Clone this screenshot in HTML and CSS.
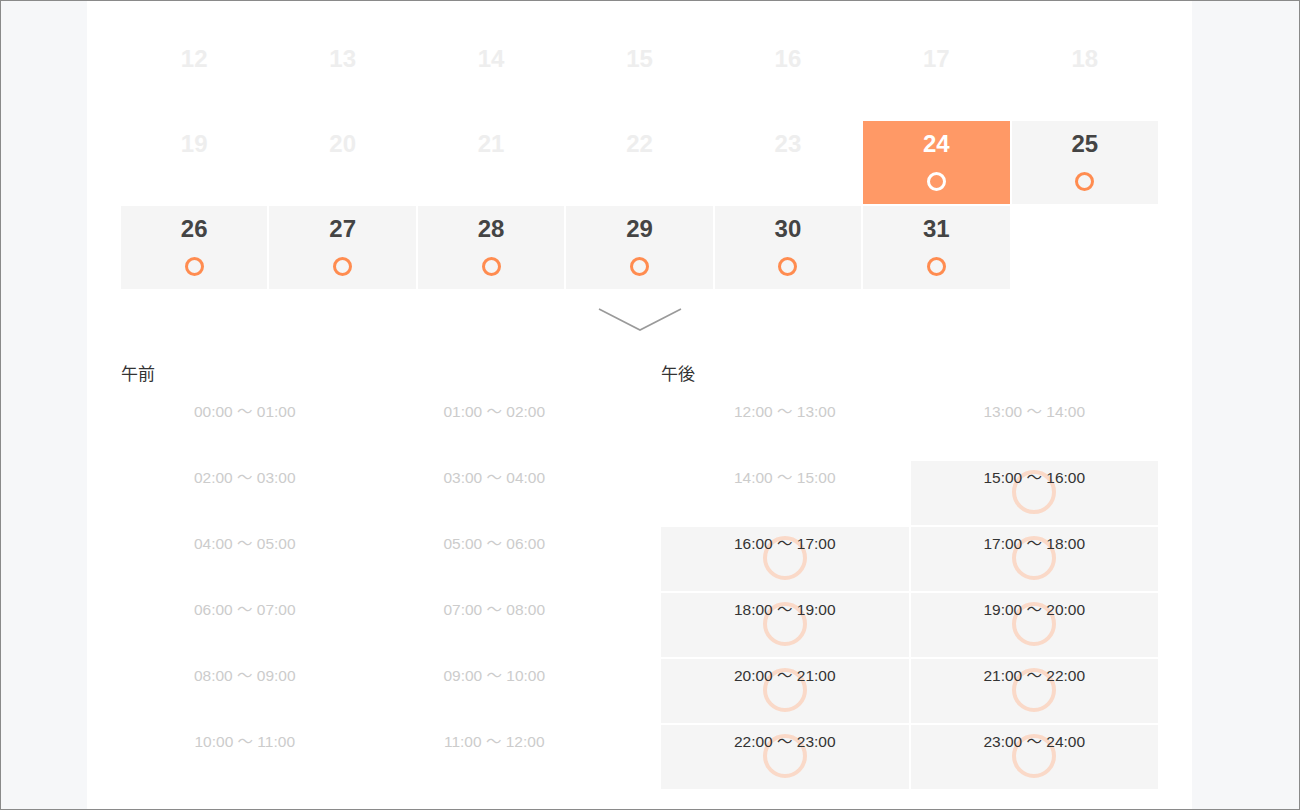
FILE: index.html
```html
<!DOCTYPE html>
<html lang="ja">
<head>
    <meta charset="UTF-8">
    <meta name="viewport" content="width=device-width, initial-scale=1.0">
    <title>予約カレンダー</title>
    <link rel="stylesheet" href="styles.css">
</head>
<body>
<div class="frame">
    <div class="panel">
        <div class="calendar">
            <div class="day off"><span class="num">12</span></div>
            <div class="day off"><span class="num">13</span></div>
            <div class="day off"><span class="num">14</span></div>
            <div class="day off"><span class="num">15</span></div>
            <div class="day off"><span class="num">16</span></div>
            <div class="day off"><span class="num">17</span></div>
            <div class="day off"><span class="num">18</span></div>

            <div class="day off"><span class="num">19</span></div>
            <div class="day off"><span class="num">20</span></div>
            <div class="day off"><span class="num">21</span></div>
            <div class="day off"><span class="num">22</span></div>
            <div class="day off"><span class="num">23</span></div>
            <div class="day open selected"><span class="num">24</span><span class="mark"></span></div>
            <div class="day open"><span class="num">25</span><span class="mark"></span></div>

            <div class="day open"><span class="num">26</span><span class="mark"></span></div>
            <div class="day open"><span class="num">27</span><span class="mark"></span></div>
            <div class="day open"><span class="num">28</span><span class="mark"></span></div>
            <div class="day open"><span class="num">29</span><span class="mark"></span></div>
            <div class="day open"><span class="num">30</span><span class="mark"></span></div>
            <div class="day open"><span class="num">31</span><span class="mark"></span></div>
            <div class="day empty"></div>
        </div>

        <div class="arrow">
            <svg width="84" height="26" viewBox="0 0 84 26">
                <polyline points="1,2 42,23 83,2" fill="none" stroke="#9a9a9a" stroke-width="1.6"/>
            </svg>
        </div>

        <div class="times">
            <div class="period">
                <div class="period-label">午前</div>
                <div class="slots">
                    <div class="slot">00:00 〜 01:00</div>
                    <div class="slot">01:00 〜 02:00</div>
                    <div class="slot">02:00 〜 03:00</div>
                    <div class="slot">03:00 〜 04:00</div>
                    <div class="slot">04:00 〜 05:00</div>
                    <div class="slot">05:00 〜 06:00</div>
                    <div class="slot">06:00 〜 07:00</div>
                    <div class="slot">07:00 〜 08:00</div>
                    <div class="slot">08:00 〜 09:00</div>
                    <div class="slot">09:00 〜 10:00</div>
                    <div class="slot">10:00 〜 11:00</div>
                    <div class="slot">11:00 〜 12:00</div>
                </div>
            </div>
            <div class="period">
                <div class="period-label">午後</div>
                <div class="slots">
                    <div class="slot">12:00 〜 13:00</div>
                    <div class="slot">13:00 〜 14:00</div>
                    <div class="slot">14:00 〜 15:00</div>
                    <div class="slot open"><span>15:00 〜 16:00</span></div>
                    <div class="slot open"><span>16:00 〜 17:00</span></div>
                    <div class="slot open"><span>17:00 〜 18:00</span></div>
                    <div class="slot open"><span>18:00 〜 19:00</span></div>
                    <div class="slot open"><span>19:00 〜 20:00</span></div>
                    <div class="slot open"><span>20:00 〜 21:00</span></div>
                    <div class="slot open"><span>21:00 〜 22:00</span></div>
                    <div class="slot open"><span>22:00 〜 23:00</span></div>
                    <div class="slot open"><span>23:00 〜 24:00</span></div>
                </div>
            </div>
        </div>
    </div>
</div>
</body>
</html>
```

FILE: styles.css
```css
body {
    margin: 0;
    font-family: "Liberation Sans", Arial, "Noto Sans CJK JP", sans-serif;
    color: #333;
}
.frame {
    height: 810px;
    box-sizing: border-box;
    border: 1px solid #8a8a8a;
    background-color: #f6f7f9;
    padding: 0 107px 0 86px;
    overflow: hidden;
}
.panel {
    background-color: #fff;
    height: 100%;
    padding: 35px 34px 0;
}

/* calendar */
.calendar {
    display: grid;
    grid-template-columns: repeat(7, 1fr);
    grid-auto-rows: 83px;
    gap: 2px;
}
.day {
    display: flex;
    flex-direction: column;
    align-items: center;
    padding-top: 9px;
    box-sizing: border-box;
}
.day .num {
    font-size: 24px;
    line-height: 28px;
    font-weight: bold;
}
.day.off .num {
    color: #eeeeee;
}
.day.open {
    background-color: #f5f5f5;
}
.day.open .num {
    color: #444;
}
.mark {
    width: 19px;
    height: 19px;
    box-sizing: border-box;
    border: 3px solid #ff8c50;
    border-radius: 50%;
    margin-top: 14px;
}
.day.selected {
    background-color: #ff9966;
}
.day.selected .num {
    color: #fff;
}
.day.selected .mark {
    border-color: #fff;
}

.arrow {
    display: flex;
    justify-content: center;
    margin-top: 18px;
    height: 26px;
}

/* time slots */
.times {
    display: grid;
    grid-template-columns: 1fr 1fr;
    gap: 43px;
    margin-top: 29px;
}
.period-label {
    font-family: "Noto Sans CJK JP", sans-serif;
    font-size: 17px;
    line-height: 22px;
    margin-bottom: 11px;
}
.slots {
    display: grid;
    grid-template-columns: 1fr 1fr;
    grid-auto-rows: 64px;
    gap: 2px;
}
.slot {
    position: relative;
    text-align: center;
    font-size: 15.5px;
    line-height: 20px;
    padding-top: 7px;
    color: #cccccc;
}
.slot.open {
    background-color: #f5f5f5;
    color: #333;
}
.slot.open::before {
    content: "";
    position: absolute;
    left: 50%;
    top: 9px;
    width: 44px;
    height: 44px;
    margin-left: -22px;
    box-sizing: border-box;
    border: 4px solid #fad9c8;
    border-radius: 50%;
}
.slot.open span {
    position: relative;
}
```
